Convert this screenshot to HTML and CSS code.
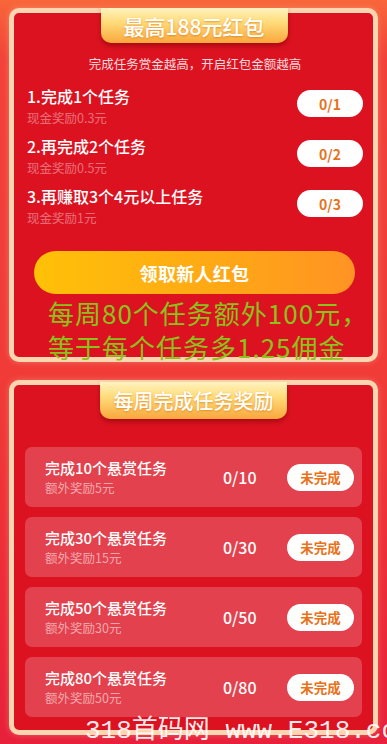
FILE: index.html
```html
<!DOCTYPE html>
<html lang="zh-CN">
<head>
<meta charset="utf-8">
<title>红包任务</title>
<link rel="stylesheet" href="styles.css">
</head>
<body>
<main class="page">
  <section class="card card-newbie">
    <div class="tab">最高188元红包</div>
    <p class="intro">完成任务赏金越高，开启红包金额越高</p>
    <ul class="steps">
      <li class="step">
        <div class="step-text">
          <div class="step-title">1.完成1个任务</div>
          <div class="step-sub">现金奖励0.3元</div>
        </div>
        <span class="pill">0/1</span>
      </li>
      <li class="step">
        <div class="step-text">
          <div class="step-title">2.再完成2个任务</div>
          <div class="step-sub">现金奖励0.5元</div>
        </div>
        <span class="pill">0/2</span>
      </li>
      <li class="step">
        <div class="step-text">
          <div class="step-title">3.再赚取3个4元以上任务</div>
          <div class="step-sub">现金奖励1元</div>
        </div>
        <span class="pill">0/3</span>
      </li>
    </ul>
    <button class="cta">领取新人红包</button>
    <div class="note">每周80个任务额外100元，<br>等于每个任务多1.25佣金</div>
  </section>

  <section class="card card-weekly">
    <div class="tab tab-weekly">每周完成任务奖励</div>
    <ul class="tasks">
      <li class="task">
        <div class="task-text">
          <div class="task-title">完成10个悬赏任务</div>
          <div class="task-sub">额外奖励5元</div>
        </div>
        <span class="task-count">0/10</span>
        <span class="pill pill-task">未完成</span>
      </li>
      <li class="task">
        <div class="task-text">
          <div class="task-title">完成30个悬赏任务</div>
          <div class="task-sub">额外奖励15元</div>
        </div>
        <span class="task-count">0/30</span>
        <span class="pill pill-task">未完成</span>
      </li>
      <li class="task">
        <div class="task-text">
          <div class="task-title">完成50个悬赏任务</div>
          <div class="task-sub">额外奖励30元</div>
        </div>
        <span class="task-count">0/50</span>
        <span class="pill pill-task">未完成</span>
      </li>
      <li class="task">
        <div class="task-text">
          <div class="task-title">完成80个悬赏任务</div>
          <div class="task-sub">额外奖励50元</div>
        </div>
        <span class="task-count">0/80</span>
        <span class="pill pill-task">未完成</span>
      </li>
    </ul>
  </section>
  <div class="watermark">318首码网 www.E318.com</div>
</main>
</body>
</html>
```

FILE: styles.css
```css
* { box-sizing: border-box; }

html, body {
  margin: 0;
  padding: 0;
}

body {
  width: 387px;
  height: 744px;
  overflow: hidden;
  font-family: "Noto Sans CJK SC", "Noto Sans", sans-serif;
  background: linear-gradient(180deg, #f8663a 0px, #f2423a 60px, #f03b37 380px, #ec2b39 600px, #e8203a 744px);
  color: #fff;
}

.page {
  position: relative;
  height: 744px;
  overflow: hidden;
  padding: 8px 9px 0;
  display: flex;
  flex-direction: column;
}

.card {
  position: relative;
  border: 5px solid #fcd6b0;
  border-radius: 10px;
  background: #dc1221;
  box-shadow: 0 0 6px rgba(255, 210, 170, 0.35);
}

.card-newbie {
  height: 354px;
  padding: 0 10px 0 13px;
}

.card-weekly {
  margin-top: 18px;
  height: 355px;
  padding: 0 11px 13px;
}

.tab {
  width: 187px;
  height: 35px;
  margin: -5px auto 0;
  border-radius: 0 0 10px 10px;
  background: linear-gradient(180deg, #fff2bf 0%, #ffdc7a 40%, #f9a73c 100%);
  box-shadow: 0 3px 4px rgba(110, 0, 0, 0.45);
  display: flex;
  align-items: center;
  justify-content: center;
  font-size: 21px;
  font-weight: 500;
  color: #fff;
  text-shadow: 0 1px 2px rgba(210, 100, 0, 0.55);
  position: relative;
  left: -1px;
}

.tab-weekly {
  margin-top: -3px;
  height: 37px;
  font-size: 20px;
  left: 0;
}

.intro {
  margin: 12px 0 0;
  text-align: center;
  font-size: 12.5px;
  line-height: 17px;
  color: rgba(255, 255, 255, 0.85);
}

.steps, .tasks {
  list-style: none;
  margin: 0;
  padding: 0;
}

.steps {
  margin-top: 14px;
  display: flex;
  flex-direction: column;
  gap: 12px;
}

.step {
  height: 38px;
  display: flex;
  justify-content: space-between;
  align-items: flex-start;
}

.step-title {
  font-size: 16px;
  line-height: 20px;
  font-weight: 500;
}

.step-sub {
  font-size: 12.5px;
  line-height: 17px;
  color: rgba(255, 255, 255, 0.4);
  margin-top: 3px;
}

.pill {
  width: 66px;
  height: 27px;
  margin-top: 4px;
  border-radius: 14px;
  background: #fff;
  color: #e8721c;
  font-size: 14px;
  font-weight: 700;
  display: flex;
  align-items: center;
  justify-content: center;
}

.cta {
  display: block;
  width: 321px;
  height: 43px;
  margin: 27px 0 0 7px;
  border: 0;
  border-radius: 22px;
  background: linear-gradient(90deg, #ffc107 0%, #ffa915 55%, #ff9323 100%);
  color: #fff;
  font-family: inherit;
  font-size: 18px;
  font-weight: 700;
  letter-spacing: 0.3px;
}

.note {
  position: absolute;
  left: 34px;
  top: 283px;
  font-size: 26px;
  line-height: 34px;
  letter-spacing: 1px;
  color: #8cc21c;
  white-space: nowrap;
}

.tasks {
  margin-top: 28px;
  display: flex;
  flex-direction: column;
  gap: 10px;
}

.task {
  height: 60px;
  border-radius: 7px;
  background: rgba(255, 255, 255, 0.2);
  display: grid;
  grid-template-columns: 178px 64px 67px;
  align-items: center;
  padding: 0 8px 0 20px;
}

.task-title {
  font-size: 15px;
  line-height: 19px;
  font-weight: 500;
}

.task-sub {
  font-size: 12.5px;
  line-height: 17px;
  margin-top: 2px;
  color: rgba(255, 255, 255, 0.55);
}

.task-count {
  font-size: 16px;
  font-weight: 500;
}

.pill-task {
  width: 67px;
  margin-top: 0;
  font-size: 13.5px;
}

.watermark {
  position: absolute;
  left: 85px;
  top: 716px;
  white-space: nowrap;
  font-family: "Liberation Mono", "Noto Sans CJK SC", monospace;
  font-size: 26px;
  line-height: 30px;
  color: rgba(255, 255, 255, 0.92);
}
```
